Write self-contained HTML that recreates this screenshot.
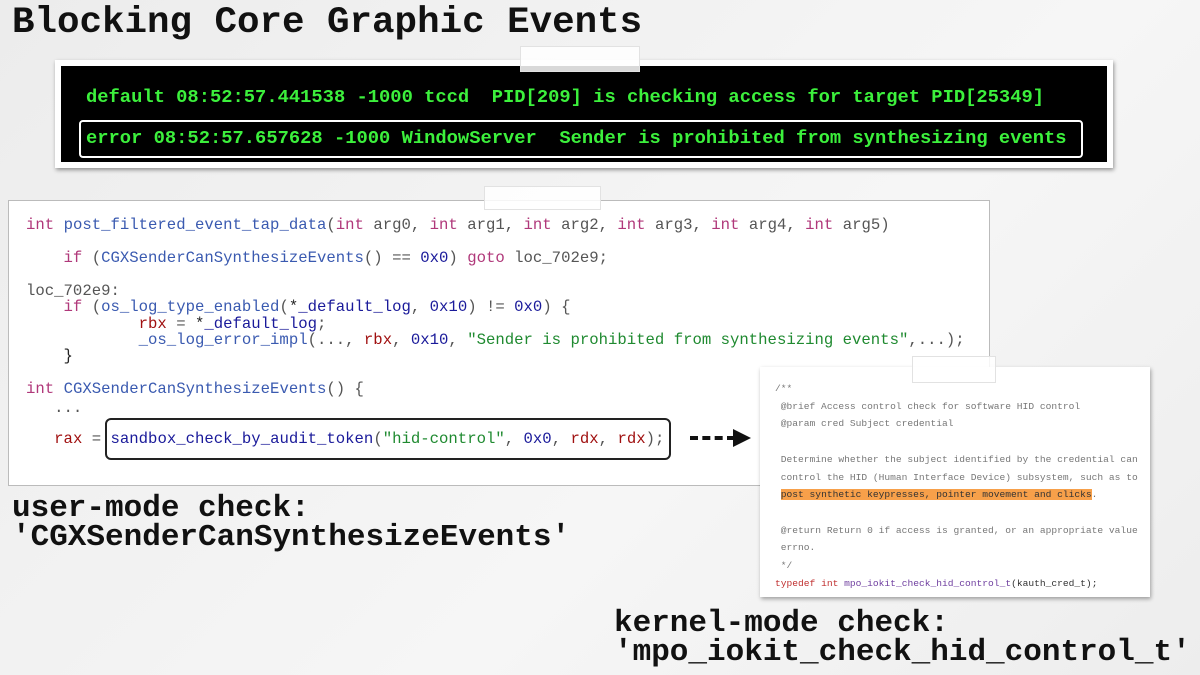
<!DOCTYPE html>
<html><head><style>
body{margin:0;width:1200px;height:675px;overflow:hidden;background:linear-gradient(135deg,#ececec,#f6f6f6 60%,#ededed);font-family:"Liberation Mono",monospace;position:relative}
.a{position:absolute;white-space:pre}
.t{font-weight:bold;color:#111}
.term{position:absolute;left:55px;top:60px;width:1046px;height:96px;background:#000;border:6px solid #fff;box-shadow:1px 2px 4px rgba(0,0,0,.4)}
.g{color:#3cf03c;font-weight:bold;font-size:18.8px}
.code{position:absolute;left:8px;top:200px;width:980px;height:284px;background:#fff;border:1px solid #bbb}
.c{font-size:15.65px;color:#555}
.k{color:#b0387a}.f{color:#3a5ab0}.n{color:#1a1a9a}.r{color:#a01010}.s{color:#1f8a30}.b{color:#222}
.rp{position:absolute;left:760px;top:367px;width:390px;height:230px;background:#fff;box-shadow:1px 2px 4px rgba(0,0,0,.35)}
.m{font-size:9.6px;color:#777}
.tape{position:absolute;background:rgba(255,255,255,.85);border:1px solid #e2e2e2}
</style></head><body>
<div class="a t" style="left:12px;top:2px;font-size:37.5px">Blocking Core Graphic Events</div>
<div class="term"></div>
<div class="a g" style="left:86px;top:86px">default 08:52:57.441538 -1000 tccd  PID[209] is checking access for target PID[25349]</div>
<div style="position:absolute;left:79px;top:120px;width:1000px;height:34px;border:2px solid #fff;border-radius:4px"></div>
<div class="a g" style="left:86px;top:127px">error 08:52:57.657628 -1000 WindowServer  Sender is prohibited from synthesizing events</div>
<div class="tape" style="left:520px;top:46px;width:118px;height:24px"></div>

<div class="code"></div>
<div class="tape" style="left:484px;top:186px;width:115px;height:22px"></div>
<div class="a c" style="left:26px;top:216px"><span class="k">int</span> <span class="f">post_filtered_event_tap_data</span>(<span class="k">int</span> arg0, <span class="k">int</span> arg1, <span class="k">int</span> arg2, <span class="k">int</span> arg3, <span class="k">int</span> arg4, <span class="k">int</span> arg5)</div>
<div class="a c" style="left:26px;top:249px">    <span class="k">if</span> (<span class="f">CGXSenderCanSynthesizeEvents</span>() == <span class="n">0x0</span>) <span class="k">goto</span> loc_702e9;</div>
<div class="a c" style="left:26px;top:282px">loc_702e9:</div>
<div class="a c" style="left:26px;top:298px">    <span class="k">if</span> (<span class="f">os_log_type_enabled</span>(<span class="b">*</span><span class="n">_default_log</span>, <span class="n">0x10</span>) != <span class="n">0x0</span>) {</div>
<div class="a c" style="left:26px;top:315px">            <span class="r">rbx</span> = <span class="b">*</span><span class="n">_default_log</span>;</div>
<div class="a c" style="left:26px;top:331px">            <span class="f">_os_log_error_impl</span>(..., <span class="r">rbx</span>, <span class="n">0x10</span>, <span class="s">"Sender is prohibited from synthesizing events"</span>,...);</div>
<div class="a c" style="left:26px;top:347px">    <span class="b">}</span></div>
<div class="a c" style="left:26px;top:380px"><span class="k">int</span> <span class="f">CGXSenderCanSynthesizeEvents</span>() {</div>
<div class="a c" style="left:26px;top:399px">   ...</div>
<div style="position:absolute;left:105px;top:418px;width:562px;height:38px;border:2px solid #222;border-radius:6px"></div>
<div class="a c" style="left:26px;top:430px">   <span class="r">rax</span> = <span class="n">sandbox_check_by_audit_token</span>(<span class="s">"hid-control"</span>, <span class="n">0x0</span>, <span class="r">rdx</span>, <span class="r">rdx</span>);</div>
<div style="position:absolute;left:690px;top:436px;width:45px;border-top:4px dashed #111"></div>
<div style="position:absolute;left:733px;top:429px;border-left:18px solid #111;border-top:9px solid transparent;border-bottom:9px solid transparent"></div>

<div class="a t" style="left:12px;top:494px;font-size:31px;line-height:29px">user-mode check:
'CGXSenderCanSynthesizeEvents'</div>

<div class="rp"></div>
<div class="tape" style="left:912px;top:356px;width:82px;height:25px"></div>
<div class="a m" style="left:775px;top:380px;line-height:17.7px">/**
 @brief Access control check for software HID control
 @param cred Subject credential

 Determine whether the subject identified by the credential can
 control the HID (Human Interface Device) subsystem, such as to
 <span style="background:#f7a04a;color:#333">post synthetic keypresses, pointer movement and clicks</span>.

 @return Return 0 if access is granted, or an appropriate value
 errno.
 */
<span style="color:#c03030">typedef</span> <span style="color:#c03030">int</span> <span style="color:#7040a0">mpo_iokit_check_hid_control_t</span><span style="color:#333">(kauth_cred_t);</span></div>

<div class="a t" style="left:614px;top:609px;font-size:31px;line-height:29px">kernel-mode check:
'mpo_iokit_check_hid_control_t'</div>
</body></html>
